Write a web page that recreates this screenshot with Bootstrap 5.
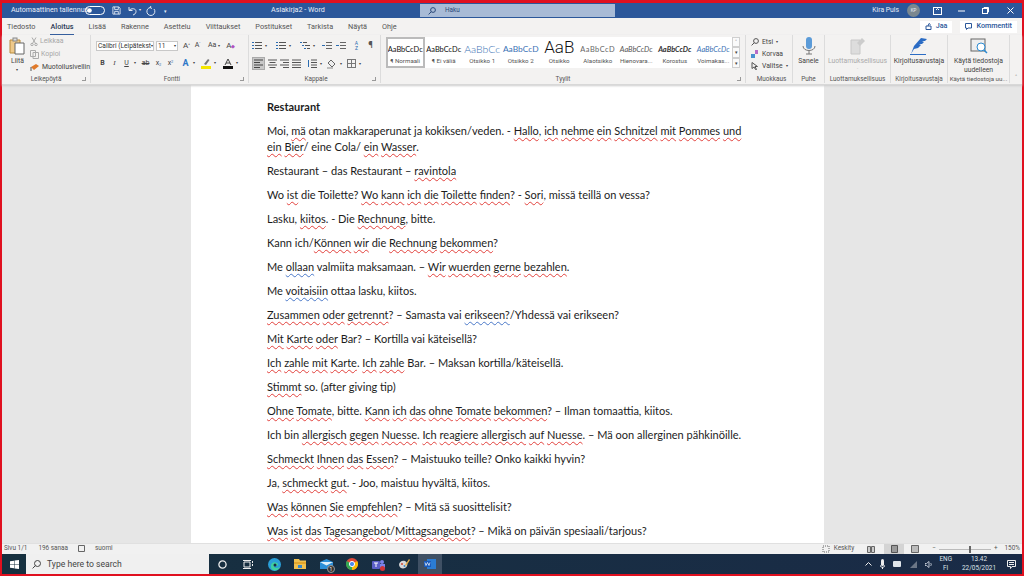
<!DOCTYPE html>
<html lang="fi"><head><meta charset="utf-8"><title>Asiakirja2 - Word</title>
<link href="https://cdn.jsdelivr.net/npm/bootstrap@5.3.0/dist/css/bootstrap.min.css" rel="stylesheet">
<style>
html,body{margin:0;height:576px;overflow:hidden;background:#e0101f}
body{font-family:Roboto,"Noto Sans",sans-serif;font-size:7px;color:#444;line-height:1.2}
.screen{height:576px;padding:3px 2px 2px;display:flex;flex-direction:column}
.tbar{height:15px;background:#2b579a;color:#e8eef7;flex:none;white-space:nowrap}
.tsearch{width:195px;height:13px;background:#a8bbd6;color:#2b4a7a;flex:none}
.tabsrow{height:17px;background:#f3f2f1;flex:none;padding-left:5px}
.rtab{padding:0 7.5px;font-size:7.3px;color:#555;position:relative;line-height:17px}
.rtab.on{color:#2b3a55;font-weight:500}
.rtab.on::after{content:"";position:absolute;left:7px;right:7px;bottom:0;height:1.5px;background:#2b579a}
.sbtn{height:12px;background:#fff;color:#2b579a;font-weight:500;font-size:7.2px;padding:0 5px}
.ribbon{height:50px;background:#f3f2f1;flex:none;border-bottom:1px solid #d8d8d8;box-shadow:0 1px 2px #ccc;position:relative}
.rg{border-right:1px solid #dcdcdc;height:48px;margin-top:0;flex:none;display:flex;flex-direction:column}
.rgb{height:40px;flex:none}
.rgl{height:9px;font-size:6.4px;color:#555;text-align:center;line-height:9px;position:relative;white-space:nowrap}
.rgl i{position:absolute;right:4px;top:2px;width:4px;height:4px;border:1px solid #999;border-width:0 1px 1px 0}
.fbox{height:10px;background:#fff;border:1px solid #c8c8c8;font-size:6.6px;color:#333;line-height:8px;padding:0 1px}
.ic{font-size:7px;color:#444;display:inline-block;text-align:center;min-width:9px}
.car{font-size:4px;line-height:4px}
.clip{height:13px;display:flex;align-items:center;gap:2px;font-size:6.9px;white-space:nowrap}
.clip.off{color:#a8a8a8}
.gal{width:346px;height:31px;background:#fff;margin:2px 0 0 5px}
.sty{width:38.5px;flex:none;overflow:hidden;text-align:center;white-space:nowrap;padding-top:6px}
.sty .s1{height:13px;line-height:13px;font-family:"Lato",sans-serif;font-size:7.400px;color:#111;overflow:hidden}
.sty .s2{font-size:6.2px;color:#555;line-height:9px;margin-top:1px}
.sty.sel{outline:2px solid #bbb;outline-offset:-2px}
.galb{width:8px;flex:none;margin-top:2px}
.galb span{display:block;height:10.3px;border:1px solid #cfcfcf;background:#fafafa;font-size:5px;line-height:8px;text-align:center}
.big{display:flex;flex-direction:column;align-items:center;text-align:center;font-size:6.8px;color:#444;line-height:9px;padding-top:2px;white-space:nowrap}
.big svg{margin-bottom:2px}
.edr{height:12px;display:flex;align-items:center;gap:3px;font-size:6.8px;white-space:nowrap}
.docarea{height:458px;background:#e6e6e6;flex:none;overflow:hidden;display:flex;justify-content:center}
.pagew{width:633px;margin-left:-9px;background:#fff;padding:14px 0 0 76px;font-family:"Lato",sans-serif;font-size:11px;line-height:16px;color:#1c1c1c;overflow:hidden;white-space:nowrap}
.pagew p{margin:0 0 8px}
.sp{text-decoration:underline wavy #e2413c 1px;text-underline-offset:1.5px}
.gr{text-decoration:underline wavy #4a78c8 1px;text-underline-offset:1.5px}
.stbar{height:11px;background:#f1f1f1;flex:none;font-size:6.4px;color:#555;border-top:1px solid #e0e0e0;padding:0 2px}
.tkbar{height:20px;flex:none;background:linear-gradient(90deg,#16303f,#1a2b47);color:#e8e8e8}
.tstart{width:24px;height:20px;flex:none}
.tksearch{width:183px;height:20px;background:#f0f0f0;color:#444;font-size:8.6px;padding-left:6px;flex:none}
.tki{width:26px;height:20px;flex:none}
.tki.act{background:#3f5064;width:24px;margin-left:1px}
.tray{font-size:6.4px;line-height:9px;text-align:center;color:#dfe4ea}
</style></head>
<body><div class="screen">

<div class="tbar d-flex align-items-center">
  <div class="d-flex align-items-center flex-none" style="width:269px;padding-left:9px">
  <span style="font-size:7.100px;width:74px">Automaattinen tallennus</span>
  <svg width="20" height="9" viewBox="0 0 20 9"><rect x=".5" y=".5" width="19" height="8" rx="4" fill="none" stroke="#fff"/><circle cx="4.500" cy="4.500" r="2.300" fill="#fff"/></svg>
  <svg style="margin-left:7px" width="9" height="9" viewBox="0 0 10 10" fill="none" stroke="#dfe7f2"><path d="M1 1h6.500L9 2.500V9H1z M3 1v3h4V1 M3 9V6h4v3"/></svg>
  <svg style="margin-left:7px" width="9" height="10" viewBox="0 0 9 10" fill="none" stroke="#dfe7f2"><path d="M1 1v3.500h3.500M1 4.500C3 2 8 2 8 5.500c0 2-1.500 3-3 3.500"/></svg>
  <span style="font-size:4px;margin-left:2px">▾</span>
  <svg style="margin-left:5px" width="10" height="10" viewBox="0 0 10 10" fill="none" stroke="#dfe7f2"><path d="M4.500 1.500a4 4 0 1 0 3.500 1.500M5 0l-1 1.500 2 1"/></svg>
  <span style="font-size:5px;margin-left:8px">▾</span>
  </div>
  <span style="width:51px;font-size:7.200px;flex:none">Asiakirja2 - Word</span>
  <span style="width:98px;flex:none"></span>
  <div class="tsearch d-flex align-items-center"><svg class="ms-2" style="margin-left:10px" width="8" height="8" viewBox="0 0 8 8" fill="none" stroke="#2b4a7a"><circle cx="5" cy="3" r="2.400"/><path d="M3.300 4.700L.6 7.400"/></svg><span style="font-size:6.400px;margin-left:9px">Haku</span></div>
  <span class="flex-grow-1"></span>
  <span style="font-size:6.800px">Kira Puls</span>
  <span class="ms-2 rounded-circle d-inline-flex align-items-center justify-content-center" style="width:13px;height:13px;background:#7b8890;font-size:4.500px">KP</span>
  <svg style="margin-left:13px" width="9" height="8" viewBox="0 0 9 8" fill="none" stroke="#fff"><rect x=".5" y=".5" width="8" height="7"/><path d="M3 3l1.500-1.500L6 3"/></svg>
  <svg style="margin-left:16px" width="7" height="2" viewBox="0 0 7 2"><path d="M0 1h7" stroke="#fff"/></svg>
  <svg style="margin-left:17px" width="7" height="7" viewBox="0 0 7 7" fill="none" stroke="#fff"><rect x=".5" y="1.500" width="5" height="5"/><path d="M2 1V.5h4.500V5H6"/></svg>
  <svg style="margin-left:18px;margin-right:8px" width="7" height="7" viewBox="0 0 7 7" stroke="#fff"><path d="M.5.500l6 6M6.500.500l-6 6"/></svg>
</div>

<div class="tabsrow d-flex align-items-center">
  <span class="rtab" style="padding-left:0">Tiedosto</span><span class="rtab on">Aloitus</span><span class="rtab">Lisää</span><span class="rtab">Rakenne</span><span class="rtab">Asettelu</span><span class="rtab">Viittaukset</span><span class="rtab">Postitukset</span><span class="rtab">Tarkista</span><span class="rtab">Näytä</span><span class="rtab">Ohje</span>
  <span class="flex-grow-1"></span>
  <span class="sbtn d-flex align-items-center me-2"><svg class="me-1" width="7" height="7" viewBox="0 0 7 7" fill="none" stroke="#2b579a"><path d="M1 3h5v3.500H1zM3 3L4 .5 5.500 1.500"/></svg>Jaa</span>
  <span class="sbtn d-flex align-items-center" style="margin-right:5px"><svg class="me-1" width="7" height="7" viewBox="0 0 7 7" fill="none" stroke="#2b579a"><path d="M.5.500h6v4.500H3L1.500 6.500V5H.5z"/></svg>Kommentit</span>
</div>

<div class="ribbon d-flex">
  <div class="rg" style="width:89px">
    <div class="rgb d-flex">
      <div class="big" style="width:26px;margin-left:3px">
        <svg width="16" height="18" viewBox="0 0 16 18"><path d="M1 3h10v13H1z" fill="#efc98a" stroke="#b98b3c"/><rect x="4" y="1" width="4" height="3" fill="#ddd" stroke="#888"/><path d="M6 6h9v11H6z" fill="#fff" stroke="#666"/></svg>
        <span>Liitä</span><span class="car" style="margin-top:2px">▾</span>
      </div>
      <div class="d-flex flex-column">
        <span class="clip off"><svg width="8" height="9" viewBox="0 0 8 9" fill="none" stroke="#aaa"><circle cx="2" cy="7.500" r="1.200"/><circle cx="6" cy="7.500" r="1.200"/><path d="M2.500 6.500L6 .5M5.500 6.500L2 .5"/></svg>Leikkaa</span>
        <span class="clip off"><svg width="9" height="9" viewBox="0 0 9 9" fill="#f3f2f1" stroke="#aaa"><path d="M.5.500h5v6h-5zM3 2.500h5.500v6H3z"/></svg>Kopioi</span>
        <span class="clip"><svg width="10" height="9" viewBox="0 0 10 9"><path d="M1 4l5-3 3 2-5 4z" fill="#e07a2a"/><path d="M1 4v4" stroke="#555"/></svg>Muotoilusivellin</span>
      </div>
    </div>
    <div class="rgl">Leikepöytä<i></i></div>
  </div>
  <div class="rg" style="width:158px;padding-left:5px">
    <div class="rgb">
      <div class="d-flex align-items-center" style="margin-top:5px;height:11px">
        <span class="fbox d-flex justify-content-between align-items-center" style="width:58px;overflow:hidden;white-space:nowrap;font-size:6.600px">Calibri (Leipätekst<span class="car">▾</span></span>
        <span class="fbox d-flex justify-content-between align-items-center" style="width:22px;margin-left:2px">11<span class="car">▾</span></span>
        <span class="ic" style="font-size:8px;margin-left:4px">A<sup style="font-size:4px">^</sup></span><span class="ic" style="font-size:7px;margin-left:2px">A<sup style="font-size:4px">˅</sup></span>
        <span class="ic" style="margin-left:6px">Aa <span class="car">▾</span></span>
        <span class="ic" style="font-size:8px;margin-left:6px">A<span style="color:#b04fc0;font-size:5px">◆</span></span>
      </div>
      <div class="d-flex align-items-center" style="margin-top:6px;height:12px;padding-left:2px;gap:3px">
        <b class="ic">B</b><i class="ic" style="font-family:'Liberation Serif',serif">I</i><u class="ic">U</u><span class="car">▾</span>
        <s class="ic" style="margin-left:2px">ab</s><span class="ic" style="margin-left:1px">x<sub style="font-size:4px;color:#2b6cb0">2</sub></span><span class="ic">x<sup style="font-size:4px;color:#2b6cb0">2</sup></span>
        <span class="ic" style="color:#2f78c8;font-size:9px;font-weight:700;margin-left:3px">A</span><span class="car">▾</span>
        <svg style="margin-left:3px" width="10" height="11" viewBox="0 0 10 11"><path d="M3 6l4-5 1.500 1L5 7z" fill="#777"/><rect y="8" width="10" height="3" fill="#f5e600"/></svg><span class="car">▾</span>
        <svg style="margin-left:4px" width="10" height="11" viewBox="0 0 10 11"><path d="M2 7l3-6 3 6M3 5h4" fill="none" stroke="#444"/><rect y="8" width="10" height="3" fill="#111"/></svg><span class="car">▾</span>
      </div>
    </div>
    <div class="rgl">Fontti<i></i></div>
  </div>
  <div class="rg" style="width:132px;padding-left:3px">
    <div class="rgb">
      <div class="d-flex align-items-center" style="margin-top:5px;height:11px;gap:3px">
        <svg width="10" height="9" viewBox="0 0 10 9" stroke="#555"><path d="M3 1.500h7M3 4.500h7M3 7.500h7"/><path d="M0 1.500h2M0 4.500h2M0 7.500h2" stroke="#2b6cb0"/></svg><span class="car">▾</span>
        <svg style="margin-left:6px" width="10" height="9" viewBox="0 0 10 9" stroke="#555"><path d="M3 1.500h7M3 4.500h7M3 7.500h7"/><path d="M0 1.500h2M0 4.500h2M0 7.500h2" stroke="#2b6cb0"/></svg><span class="car">▾</span>
        <svg style="margin-left:6px" width="10" height="9" viewBox="0 0 10 9" stroke="#555"><path d="M3 1.500h4M5 4.500h5M7 7.500h3"/><path d="M0 1.500h2M2 4.500h2M4 7.500h2" stroke="#2b6cb0"/></svg><span class="car">▾</span>
        <svg class="ms-1" width="10" height="9" viewBox="0 0 10 9" fill="none"><path d="M4 1.500h6M4 4.500h6M4 7.500h6" stroke="#666"/><path d="M0 4.500h3" stroke="#2b6cb0"/></svg>
        <svg style="margin-left:1px" width="10" height="9" viewBox="0 0 10 9" fill="none"><path d="M4 1.500h6M4 4.500h6M4 7.500h6" stroke="#666"/><path d="M0 4.500h3" stroke="#2b6cb0"/></svg>
        <span class="ic" style="font-size:5px;line-height:5px;color:#2b6cb0;margin-left:3px">A<br>Z</span>
        <span class="ic" style="font-size:9px;font-weight:700;color:#555;margin-left:2px">¶</span>
      </div>
      <div class="d-flex align-items-center" style="margin-top:6px;height:13px;gap:3px">
        <span class="d-flex align-items-center justify-content-center" style="width:13px;height:13px;background:#c8c8c8;border:1px solid #aaa"><svg width="9" height="9" viewBox="0 0 9 9" stroke="#444"><path d="M0 1h9M0 3.500h6M0 6h9M0 8.500h6"/></svg></span>
        <svg width="9" height="9" viewBox="0 0 9 9" stroke="#555"><path d="M0 1h9M1.500 3.500h6M0 6h9M1.500 8.500h6"/></svg>
        <svg width="9" height="9" viewBox="0 0 9 9" stroke="#555"><path d="M0 1h9M3 3.500h6M0 6h9M3 8.500h6"/></svg>
        <svg width="9" height="9" viewBox="0 0 9 9" stroke="#555"><path d="M0 1h9M0 3.500h9M0 6h9M0 8.500h9"/></svg>
        <svg style="margin-left:3px" width="10" height="9" viewBox="0 0 10 9" stroke="#555"><path d="M4 1h6M4 3.500h6M4 6h6M4 8.500h6"/><path d="M1.500 1v7" stroke="#2b6cb0"/></svg><span class="car">▾</span>
        <svg style="margin-left:2px" width="10" height="10" viewBox="0 0 10 10"><path d="M4 1l4 4-3 3-4-4z" fill="#eee" stroke="#666"/><path d="M0 9h6" stroke="#888"/></svg><span class="car">▾</span>
        <svg style="margin-left:2px" width="9" height="9" viewBox="0 0 9 9" fill="none" stroke="#777"><rect x=".5" y=".5" width="8" height="8"/><path d="M4.500 0v9M0 4.500h9"/></svg><span class="car">▾</span>
      </div>
    </div>
    <div class="rgl">Kappale<i></i></div>
  </div>
  <div class="rg" style="width:365px">
    <div class="rgb d-flex">
      <div class="gal d-flex">
        <div class="sty sel"><div class="s1">AaBbCcDc</div><div class="s2">¶ Normaali</div></div>
        <div class="sty"><div class="s1">AaBbCcDc</div><div class="s2">¶ Ei väliä</div></div>
        <div class="sty"><div class="s1" style="font-size:10.500px;color:#3a72b5;font-weight:300">AaBbCc</div><div class="s2">Otsikko 1</div></div>
        <div class="sty"><div class="s1" style="font-size:8.400px;color:#3a72b5">AaBbCcD</div><div class="s2">Otsikko 2</div></div>
        <div class="sty" style="padding-top:1px"><div class="s1" style="font-family:Roboto,sans-serif;font-size:17px;height:18px;line-height:18px;font-weight:300;color:#111">AaB</div><div class="s2">Otsikko</div></div>
        <div class="sty"><div class="s1" style="color:#666;letter-spacing:.5px">AaBbCcD</div><div class="s2">Alaotsikko</div></div>
        <div class="sty"><div class="s1" style="color:#555;font-style:italic">AaBbCcDc</div><div class="s2">Hienovara...</div></div>
        <div class="sty"><div class="s1" style="font-style:italic;font-weight:700;color:#333">AaBbCcDc</div><div class="s2">Korostus</div></div>
        <div class="sty"><div class="s1" style="font-style:italic;color:#3a72b5">AaBbCcDc</div><div class="s2">Voimakas...</div></div>
      </div>
      <div class="galb"><span>˄</span><span>▾</span><span>▾</span></div>
    </div>
    <div class="rgl">Tyylit<i></i></div>
  </div>
  <div class="rg" style="width:47px;padding-left:5px">
    <div class="rgb">
      <div class="edr" style="margin-top:1px"><svg width="8" height="8" viewBox="0 0 8 8" fill="none" stroke="#555"><circle cx="5" cy="3" r="2.400"/><path d="M3.300 4.700L.6 7.400"/></svg>Etsi <span class="car">▾</span></div>
      <div class="edr"><svg width="8" height="8" viewBox="0 0 8 8"><rect x="4" y="0" width="3" height="4" fill="#b86bc8"/><rect x="0" y="4" width="4" height="4" fill="#4a90d0"/></svg>Korvaa</div>
      <div class="edr"><svg width="8" height="8" viewBox="0 0 8 8" fill="none" stroke="#555"><path d="M1 .5l5.500 4H4L5.500 7.500 4.500 7.500 3 5 1 6.500z"/></svg>Valitse <span class="car">▾</span></div>
    </div>
    <div class="rgl">Muokkaus</div>
  </div>
  <div class="rg" style="width:32px">
    <div class="rgb big">
      <svg width="14" height="18" viewBox="0 0 14 18"><rect x="4" y="0" width="6" height="12" rx="3" fill="#5b9bd8"/><path d="M1 9c0 6 12 6 12 0M7 14v3M4 17h6" fill="none" stroke="#777"/></svg>
      <span>Sanele</span>
    </div>
    <div class="rgl">Puhe</div>
  </div>
  <div class="rg" style="width:66px">
    <div class="rgb big" style="color:#aaa">
      <svg width="15" height="18" viewBox="0 0 15 18"><path d="M1 3h9v14H1z" fill="#ddd" stroke="#c8c8c8"/><path d="M7 6l5-5 3 3-5 5z" fill="#ccc"/></svg>
      <span>Luottamuksellisuus</span><span class="car" style="margin-top:2px">˅</span>
    </div>
    <div class="rgl">Luottamuksellisuus</div>
  </div>
  <div class="rg" style="width:57px">
    <div class="rgb big">
      <svg width="18" height="18" viewBox="0 0 18 18"><path d="M1 17l3-8 7-8 6 1-2 2h-3l2 1-2 2h-3l2 1-3 3-4 1z" fill="#2b6cc4"/><path d="M0 17.500h16" stroke="#2b6cc4"/></svg>
      <span>Kirjoitusavustaja</span>
    </div>
    <div class="rgl">Kirjoitusavustaja</div>
  </div>
  <div class="rg" style="width:62px">
    <div class="rgb big">
      <svg width="18" height="18" viewBox="0 0 18 18"><rect x="1" y="2" width="14" height="12" fill="#eee" stroke="#666"/><circle cx="11" cy="10" r="4" fill="#fff" stroke="#2b8ad0"/><path d="M14 13l3 3" stroke="#2b8ad0" stroke-width="1.500"/></svg>
      <span style="line-height:9px">Käytä tiedostoja<br>uudelleen</span>
    </div>
    <div class="rgl" style="overflow:hidden;font-size:6.200px">Käytä tiedostoja uu...</div>
  </div>
  <div class="flex-grow-1 d-flex align-items-end justify-content-center pb-1" style="font-size:6px">˄</div>
</div>

<div class="docarea"><div class="pagew">
<p style="font-weight:700">Restaurant</p>
<p>Moi, <span class="sp">mä</span> otan makkaraperunat ja kokiksen/veden. - <span class="sp">Hallo</span>, <span class="sp">ich</span> <span class="sp">nehme</span> <span class="sp">ein</span> <span class="sp">Schnitzel</span> <span class="sp">mit</span> <span class="sp">Pommes</span> <span class="sp">und</span><br><span class="sp">ein</span> <span class="sp">Bier</span>/ eine Cola/ <span class="sp">ein</span> <span class="sp">Wasser</span>.</p>
<p>Restaurant – das Restaurant – <span class="sp">ravintola</span></p>
<p>Wo <span class="sp">ist</span> die Toilette? <span class="sp">Wo</span> <span class="sp">kann</span> <span class="sp">ich</span> <span class="sp">die</span> <span class="sp">Toilette</span> <span class="sp">finden</span>? - <span class="sp">Sori</span>, missä teillä on vessa?</p>
<p>Lasku, <span class="sp">kiitos</span>. - Die <span class="sp">Rechnung</span>, bitte.</p>
<p>Kann ich/<span class="sp">Können</span> <span class="sp">wir</span> die <span class="sp">Rechnung</span> <span class="sp">bekommen</span>?</p>
<p>Me <span class="gr">ollaan</span> valmiita maksamaan. – <span class="sp">Wir</span> <span class="sp">wuerden</span> <span class="sp">gerne</span> <span class="sp">bezahlen</span>.</p>
<p>Me <span class="gr">voitaisiin</span> ottaa lasku, kiitos.</p>
<p><span class="sp">Zusammen</span> <span class="sp">oder</span> <span class="sp">getrennt</span>? – Samasta vai <span class="gr">erikseen?</span>/Yhdessä vai erikseen?</p>
<p><span class="sp">Mit</span> <span class="sp">Karte</span> <span class="sp">oder</span> Bar? – Kortilla vai käteisellä?</p>
<p><span class="sp">Ich</span> <span class="sp">zahle</span> <span class="sp">mit</span> <span class="sp">Karte</span>. <span class="sp">Ich</span> <span class="sp">zahle</span> Bar. – Maksan kortilla/käteisellä.</p>
<p><span class="sp">Stimmt</span> so. (after giving tip)</p>
<p><span class="sp">Ohne</span> <span class="sp">Tomate</span>, bitte. <span class="sp">Kann</span> <span class="sp">ich</span> <span class="sp">das</span> <span class="sp">ohne</span> <span class="sp">Tomate</span> <span class="sp">bekommen</span>? – Ilman tomaattia, kiitos.</p>
<p>Ich bin <span class="sp">allergisch</span> <span class="sp">gegen</span> <span class="sp">Nuesse</span>. <span class="sp">Ich</span> <span class="sp">reagiere</span> <span class="sp">allergisch</span> <span class="sp">auf</span> <span class="sp">Nuesse</span>. – Mä oon allerginen pähkinöille.</p>
<p><span class="sp">Schmeckt</span> <span class="sp">Ihnen</span> <span class="sp">das</span> <span class="sp">Essen</span>? – Maistuuko teille? Onko kaikki hyvin?</p>
<p>Ja, <span class="sp">schmeckt</span> <span class="sp">gut</span>. - Joo, maistuu hyvältä, kiitos.</p>
<p><span class="sp">Was</span> <span class="sp">können</span> <span class="sp">Sie</span> <span class="sp">empfehlen</span>? – Mitä sä suosittelisit?</p>
<p><span class="sp">Was</span> <span class="sp">ist</span> <span class="sp">das</span> <span class="sp">Tagesangebot</span>/<span class="sp">Mittagsangebot</span>? – Mikä on päivän spesiaali/tarjous?</p>
</div></div>

<div class="stbar d-flex align-items-center">
  <span>Sivu 1/1</span><span style="margin-left:11px">196 sanaa</span>
  <svg style="margin-left:10px" width="8" height="8" viewBox="0 0 8 8" fill="none" stroke="#666"><path d="M.5.500h6v6h-6z"/></svg>
  <span style="margin-left:9px">suomi</span>
  <span class="flex-grow-1"></span>
  <svg width="8" height="8" viewBox="0 0 8 8" fill="none" stroke="#666"><rect x="1" y="1" width="6" height="6" stroke-dasharray="1 1"/></svg>
  <span class="ms-1">Keskity</span>
  <svg style="margin-left:13px" width="8" height="7" viewBox="0 0 8 7" fill="#ccc" stroke="#666"><path d="M.5.500h3v6h-3zM4.500.500h3v6h-3z"/></svg>
  <span class="d-flex align-items-center justify-content-center" style="margin-left:9px;width:20px;height:10px;background:#d4d4d4"><svg width="7" height="8" viewBox="0 0 7 8" fill="#999" stroke="#555"><path d="M.5.500h6v7h-6z"/></svg></span>
  <svg style="margin-left:7px" width="8" height="8" viewBox="0 0 8 8" fill="#bbb" stroke="#666"><path d="M.5.500h7v7h-7z"/></svg>
  <span style="margin-left:13px">−</span>
  <span class="d-flex align-items-center" style="margin-left:3px;width:52px;height:1px;background:#bbb"><span style="margin-left:30px;width:2px;height:7px;background:#666"></span></span>
  <span style="margin-left:3px">+</span>
  <span style="margin-left:7px">150%</span>
</div>

<div class="tkbar d-flex align-items-center">
  <div class="tstart d-flex align-items-center justify-content-center"><svg width="9" height="9" viewBox="0 0 9 9" fill="#fff"><path d="M0 1.300l4-.6V4.200H0zM4.500.6L9 0V4.200H4.500zM0 4.700h4v3.600l-4-.6zM4.500 4.700H9V9l-4.500-.6z"/></svg></div>
  <div class="tksearch d-flex align-items-center"><svg style="margin-right:6px" width="9" height="9" viewBox="0 0 9 9" fill="none" stroke="#444"><circle cx="5.500" cy="3.500" r="3"/><path d="M3.500 5.500L.6 8.400"/></svg>Type here to search</div>
  <div class="tki d-flex align-items-center justify-content-center"><svg width="9" height="9" viewBox="0 0 9 9" fill="none" stroke="#eee" stroke-width="1.300"><circle cx="4.500" cy="4.500" r="3.600"/></svg></div>
  <div class="tki d-flex align-items-center justify-content-center"><svg width="10" height="9" viewBox="0 0 10 9" fill="none" stroke="#eee"><path d="M1 2h6v5H1zM0 .5h8M0 8.500h8M9.500 1v2M9.500 4v2"/></svg></div>
  <div class="tki d-flex align-items-center justify-content-center"><svg width="13" height="13" viewBox="0 0 13 13"><circle cx="6.500" cy="6.500" r="6.500" fill="#2a9fd8"/><path d="M3 8c0-3 3-5 6-3 2 1 1 3-1 3H6c0 2 3 3 6 1-1 3-5 4-7 3-2-1-2-2-2-4z" fill="#3fd0a0"/><circle cx="7" cy="7" r="1.500" fill="#1b2c45"/></svg></div>
  <div class="tki d-flex align-items-center justify-content-center"><svg width="12" height="10" viewBox="0 0 12 10"><path d="M0 0h5l1 1.500h6V10H0z" fill="#f2c14e"/><rect y="3" width="12" height="2" fill="#e4a72c"/><rect x="4" y="6" width="4" height="3" fill="#3a88c8"/></svg></div>
  <div class="tki d-flex align-items-center justify-content-center position-relative"><svg width="13" height="10" viewBox="0 0 13 10"><path d="M0 3l6.500-3L13 3v7H0z" fill="#2b8fd8"/><path d="M0 3l6.500 3.500L13 3" fill="#dff0fb"/></svg><span class="position-absolute rounded-circle text-center" style="right:4px;bottom:1px;width:8px;height:8px;background:#333;border:1px solid #999;font-size:5px;line-height:6px;color:#fff">1</span></div>
  <div class="tki d-flex align-items-center justify-content-center"><svg width="12" height="12" viewBox="0 0 12 12"><circle cx="6" cy="6" r="6" fill="#e04a3a"/><path d="M6 6L.8 3A6 6 0 0 0 6 12z" fill="#34a853"/><path d="M6 6l5.200-3A6 6 0 0 1 6 12z" fill="#fbbc05"/><circle cx="6" cy="6" r="2.600" fill="#4a8af0" stroke="#fff"/></svg></div>
  <div class="tki d-flex align-items-center justify-content-center position-relative"><svg width="13" height="11" viewBox="0 0 13 11"><rect y="2" width="8" height="8" rx="1" fill="#5b5fc7"/><circle cx="10" cy="3" r="2" fill="#7b83eb"/><path d="M8 5h5v3a2 2 0 0 1-5 0z" fill="#7b83eb"/><path d="M2 4h4M4 4v4" stroke="#fff"/></svg><span class="position-absolute rounded-circle" style="right:6px;bottom:3px;width:5px;height:5px;background:#d13438"></span></div>
  <div class="tki d-flex align-items-center justify-content-center"><svg width="12" height="11" viewBox="0 0 12 11"><path d="M1 6c0-3 3-5 6-4 2 1 3 3 2 5-1 3-7 4-8-1z" fill="#d8d8d8"/><circle cx="4" cy="5" r="1" fill="#d04a3a"/><circle cx="6.500" cy="7" r="1" fill="#3a88c8"/><path d="M7 6l4-6 1 1-4 6z" fill="#e8b04a"/></svg></div>
  <div class="tki act d-flex align-items-center justify-content-center"><svg width="12" height="10" viewBox="0 0 12 10"><rect x="3" width="9" height="10" fill="#2b7cd3"/><rect y="2" width="7" height="6" fill="#185abd"/><path d="M1 3.500l1 3 1.500-3 1.500 3 1-3" fill="none" stroke="#fff" stroke-width=".7"/></svg></div>
  <span class="flex-grow-1"></span>
  <svg width="7" height="4" viewBox="0 0 7 4" fill="none" stroke="#eee"><path d="M.5 3.500l3-3 3 3"/></svg>
  <svg class="ms-2" width="5" height="10" viewBox="0 0 5 10"><rect x="1" width="3" height="7" rx="1.500" fill="#eee"/><path d="M0 6c0 3 5 3 5 0M2.500 8v2" fill="none" stroke="#eee"/></svg>
  <svg class="ms-2" width="9" height="6" viewBox="0 0 9 6"><rect width="8" height="6" rx="1" fill="#dfe4ea"/></svg>
  <svg class="ms-2" width="7" height="7" viewBox="0 0 7 7"><path d="M0 7L7 0v7z" fill="#6b7686"/></svg>
  <svg class="ms-2" width="8" height="7" viewBox="0 0 8 7" fill="none" stroke="#bcc4d0"><path d="M0 2.500h1.500L4 .5v6L1.500 4.500H0zM5.500 2c1 1 1 2 0 3"/></svg>
  <div class="tray" style="margin-left:6px">ENG<br>FI</div>
  <div class="tray" style="margin-left:9px;width:36px">13.42<br>22/05/2021</div>
  <svg style="margin-left:10px;margin-right:6px" width="9" height="9" viewBox="0 0 9 9" fill="none" stroke="#eee"><path d="M.5.500h8v6H5L3.500 8.500V6.500h-3zM2 2.500h5M2 4.500h5"/></svg>
</div>
</div></body></html>
